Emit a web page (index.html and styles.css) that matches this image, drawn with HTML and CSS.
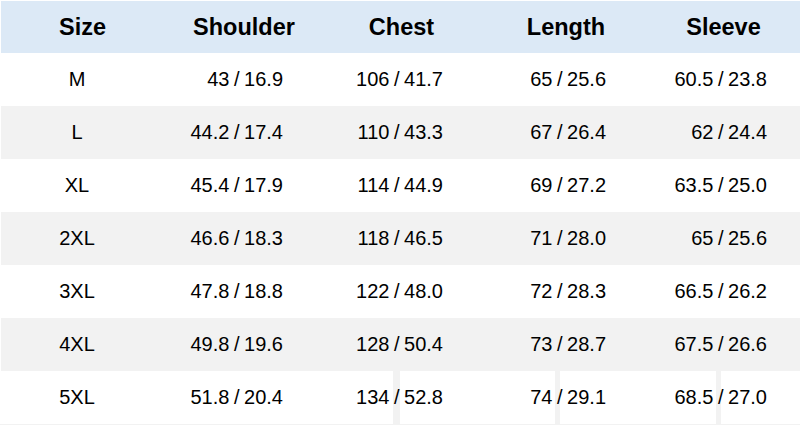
FILE: index.html
```html
<!DOCTYPE html>
<html>
<head>
<meta charset="utf-8">
<link rel="stylesheet" href="styles.css">
</head>
<body>
<div class="table">
  <div class="row head">
    <div class="cell c1">Size</div>
    <div class="cell c2">Shoulder</div>
    <div class="cell c3">Chest</div>
    <div class="cell c4">Length</div>
    <div class="cell c5">Sleeve</div>
  </div>
  <div class="row">
    <div class="cell c1">M</div>
    <div class="cell c2">43 / 16.9</div>
    <div class="cell c3">106 / 41.7</div>
    <div class="cell c4">65 / 25.6</div>
    <div class="cell c5">60.5 / 23.8</div>
  </div>
  <div class="row alt">
    <div class="cell c1">L</div>
    <div class="cell c2">44.2 / 17.4</div>
    <div class="cell c3">110 / 43.3</div>
    <div class="cell c4">67 / 26.4</div>
    <div class="cell c5">62 / 24.4</div>
  </div>
  <div class="row">
    <div class="cell c1">XL</div>
    <div class="cell c2">45.4 / 17.9</div>
    <div class="cell c3">114 / 44.9</div>
    <div class="cell c4">69 / 27.2</div>
    <div class="cell c5">63.5 / 25.0</div>
  </div>
  <div class="row alt">
    <div class="cell c1">2XL</div>
    <div class="cell c2">46.6 / 18.3</div>
    <div class="cell c3">118 / 46.5</div>
    <div class="cell c4">71 / 28.0</div>
    <div class="cell c5">65 / 25.6</div>
  </div>
  <div class="row">
    <div class="cell c1">3XL</div>
    <div class="cell c2">47.8 / 18.8</div>
    <div class="cell c3">122 / 48.0</div>
    <div class="cell c4">72 / 28.3</div>
    <div class="cell c5">66.5 / 26.2</div>
  </div>
  <div class="row alt">
    <div class="cell c1">4XL</div>
    <div class="cell c2">49.8 / 19.6</div>
    <div class="cell c3">128 / 50.4</div>
    <div class="cell c4">73 / 28.7</div>
    <div class="cell c5">67.5 / 26.6</div>
  </div>
  <div class="row last">
    <div class="cell c1">5XL</div>
    <div class="cell c2">51.8 / 20.4</div>
    <div class="cell c3">134 / 52.8</div>
    <div class="cell c4">74 / 29.1</div>
    <div class="cell c5">68.5 / 27.0</div>
  </div>
</div>
</body>
</html>
```
FILE: styles.css
```css
html, body {
  margin: 0;
  padding: 0;
  background: #ffffff;
}
body {
  font-family: "Liberation Sans", Arial, sans-serif;
  color: #000;
  width: 800px;
  height: 425px;
  overflow: hidden;
}
.table {
  padding: 1px 0 0 1px;
  display: flex;
  flex-direction: column;
  border-bottom: 1px solid #f2f2f2;
}
.row {
  display: grid;
  grid-template-columns: 160px 160px 160px 160px 159px;
  height: 53px;
  font-size: 20px;
  word-spacing: -1px;
}
.row.alt {
  background: #f2f2f2;
}
.row.last {
  background: linear-gradient(to right,
    #fff 0 392px, #f2f2f2 392px 399px,
    #fff 399px 554px, #f2f2f2 554px 559px,
    #fff 559px 715px, #f2f2f2 715px 720px,
    #fff 720px);
}
.cell {
  display: flex;
  align-items: center;
  justify-content: flex-end;
  white-space: nowrap;
}
.row .c1 { justify-content: center; padding-right: 8px; }
.row .c2 { padding-right: 38px; }
.row .c3 { padding-right: 38px; }
.row .c4 { padding-right: 35px; }
.row .c5 { padding-right: 33px; }

.row.head {
  height: 52px;
  background: #dce9f6;
  font-size: 23.5px;
  font-weight: bold;
  word-spacing: 0;
}
.row.head .cell { justify-content: center; padding-right: 0; }
.row.head .c1 { padding-left: 3px; }
.row.head .c2 { padding-left: 6px; }
.row.head .c3 { padding-left: 1px; }
.row.head .c4 { padding-left: 10px; }
.row.head .c5 { padding-left: 6px; }
```
